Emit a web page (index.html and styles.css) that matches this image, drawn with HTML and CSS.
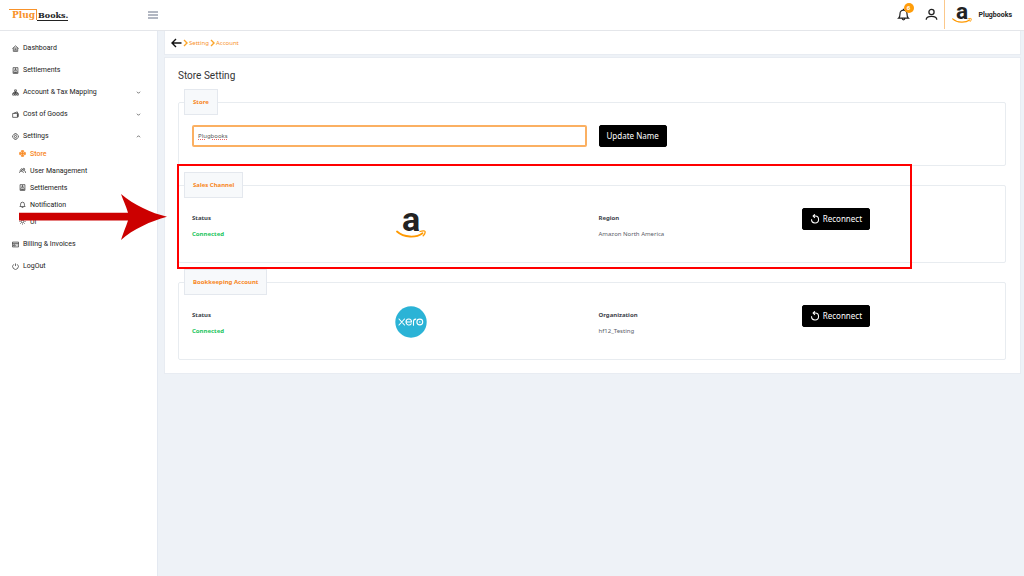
FILE: index.html
```html
<!DOCTYPE html>
<html lang="en">
<head>
<meta charset="utf-8">
<meta name="viewport" content="width=device-width, initial-scale=1">
<title>Plugbooks - Store Setting</title>
<link rel="stylesheet" href="styles.css">
</head>
<body>
<svg class="defs" aria-hidden="true">
  <symbol id="amazon" viewBox="0 0 30 28">
    <text class="amazon-letter" x="15" y="20" text-anchor="middle">a</text>
    <path d="M1 20.5C8 26.8 20 27 26.5 22.2" fill="none" stroke="#f90" stroke-width="1.8" stroke-linecap="round"/>
    <path d="M24 20.500c2.200-.9 4.800-.7 5-.1.3.9-.6 3.100-1.800 4.300" fill="none" stroke="#f90" stroke-width="1.300" stroke-linecap="round"/>
  </symbol>
  <symbol id="book" viewBox="0 0 16 16"><path d="M2.500 1.500h11v13h-11zM2.500 11.500h11M5.500 9c0-3 5-3 5 0M5 13h6"/><circle cx="8" cy="5" r="1.500"/></symbol>
  <symbol id="chevron" viewBox="0 0 16 16"><path d="M3 5.500l5 5 5-5"/></symbol>
  <symbol id="redo" viewBox="0 0 16 16"><path d="M2.500 8.500a5.600 5.600 0 1 0 6-5.300H5M7.800.5L5 3.300l2.800 2.900"/></symbol>
</svg>

<header class="topbar">
  <a class="logo" href="#" aria-label="PlugBooks"><span class="logo-plug">Plug</span><span class="logo-books">Books.</span></a>
  <button class="icon-button menu" aria-label="Toggle menu"><svg viewBox="0 0 10 8"><path d="M0 1h10M0 4h10M0 7h10"/></svg></button>
  <div class="topbar-right">
    <button class="icon-button bell" aria-label="Notifications">
      <svg viewBox="0 0 16 16"><path d="M2 12.500c1.700-1.500 1.700-3 1.700-5.500a4.300 4.300 0 0 1 8.600 0c0 2.500 0 4 1.700 5.500zM8 2.700V1M6.300 13c.2 2 3.200 2 3.400 0"/></svg>
      <span class="badge">6</span>
    </button>
    <button class="icon-button user" aria-label="Account"><svg viewBox="0 0 16 16"><circle cx="8" cy="5" r="3.200"/><path d="M1.500 14.500c0-5.700 13-5.700 13 0"/></svg></button>
    <div class="profile">
      <svg class="profile-logo" viewBox="0 0 30 28" role="img" aria-label="Amazon"><use href="#amazon"/></svg>
      <span>Plugbooks</span>
    </div>
  </div>
</header>

<div class="layout">
  <nav class="sidebar">
    <a class="item" href="#"><svg class="icon" viewBox="0 0 16 16"><path d="M1 8l7-6 7 6M3 7v7.500h10V7M6.500 14V9.500h3V14M5 7h6"/></svg>Dashboard</a>
    <a class="item" href="#"><svg class="icon"><use href="#book"/></svg>Settlements</a>
    <a class="item" href="#"><svg class="icon" viewBox="0 0 16 16"><path d="M6 2h4v4H6zM1.500 10h4v4h-4zM6.500 10h3v4h-3zM11 10h3.500v4H11zM8 6v4M3.500 10V8h9v2"/></svg>Account &amp; Tax Mapping<svg class="chevron"><use href="#chevron"/></svg></a>
    <a class="item" href="#"><svg class="icon" viewBox="0 0 16 16"><path d="M1.500 5.500h11v9h-11zM4 5l8-3 1 3M12.500 6h2v7h-2M11 9.500h3"/></svg>Cost of Goods<svg class="chevron"><use href="#chevron"/></svg></a>
    <a class="item" href="#"><svg class="icon" viewBox="0 0 16 16"><path d="M6 1.500h4l.7 2 2 .8 1.800 1.700v4l-1.800 1.700-2 .8-.7 2H6l-.7-2-2-.8L1.500 10V6l1.800-1.700 2-.8z"/><circle cx="8" cy="8" r="2.500"/></svg>Settings<svg class="chevron up"><use href="#chevron"/></svg></a>
    <div class="submenu">
      <a class="subitem active" href="#"><svg class="icon" viewBox="0 0 16 16"><path d="M5.500 1.500h5v4h4v5h-4v4h-5v-4h-4v-5h4zM8 2v12M2 8h12"/></svg>Store</a>
      <a class="subitem" href="#"><svg class="icon" viewBox="0 0 16 16"><circle cx="6" cy="6" r="2"/><circle cx="11" cy="5" r="2"/><path d="M1 13.500c0-5 9-5 9 0M10 8.500c3-1 5 1 5 5M1 10l2-2.500"/></svg>User Management</a>
      <a class="subitem" href="#"><svg class="icon"><use href="#book"/></svg>Settlements</a>
      <a class="subitem" href="#"><svg class="icon" viewBox="0 0 16 16"><path d="M2 12.500c1.700-1.500 1.700-3 1.700-5.500a4.300 4.300 0 0 1 8.600 0c0 2.500 0 4 1.700 5.500zM6 15h4"/></svg>Notification</a>
      <a class="subitem" href="#"><svg class="icon" viewBox="0 0 16 16"><circle cx="8" cy="8" r="3"/><path d="M8 1v2M8 13v2M1 8h2M13 8h2M3 3l1.500 1.500M11.500 11.500L13 13M3 13l1.500-1.500M11.500 4.500L13 3"/></svg>UI</a>
      <svg class="arrow" viewBox="0 0 148 46" aria-hidden="true"><path d="M0 18.700H109C107 12 104 6 102 0 115 11 132 19 148 22.700 132 27 114 35 102 46 104 39 107 33 109 26.500H0z" fill="#c00"/></svg>
    </div>
    <a class="item" href="#"><svg class="icon" viewBox="0 0 16 16"><path d="M1 2.500h14v11H1zM1 5.500h14M3.500 8.500h4v2.500h-4zM10 9h3"/></svg>Billing &amp; Invoices</a>
    <a class="item" href="#"><svg class="icon" viewBox="0 0 16 16"><path d="M4 3a6.500 6.500 0 1 0 8 0M8 1v6"/></svg>LogOut</a>
  </nav>

  <main class="content">
    <nav class="card breadcrumb" aria-label="Breadcrumb">
      <a class="back" href="#" aria-label="Back"><svg viewBox="0 0 11 10"><path d="M10.500 5H1M5 1L1 5l4 4"/></svg></a>
      <svg class="crumb-mark" viewBox="0 0 5 8"><path d="M1 1l3 3-3 3"/></svg><a href="#">Setting</a>
      <svg class="crumb-mark" viewBox="0 0 5 8"><path d="M1 1l3 3-3 3"/></svg><a href="#">Account</a>
    </nav>

    <section class="card settings">
      <h1>Store Setting</h1>
      <div class="groups">
        <form class="group">
          <fieldset>
            <legend>Store</legend>
            <div class="row name-row">
              <div class="name-field"><input type="text" value="Plugbooks" aria-label="Store name"></div>
              <div><button class="primary" type="button">Update Name</button></div>
            </div>
          </fieldset>
        </form>
        <div class="group">
          <fieldset>
            <legend>Sales Channel</legend>
            <div class="row">
              <div class="pair"><strong>Status</strong><strong class="ok">Connected</strong></div>
              <div><svg class="brand" viewBox="0 0 30 28" role="img" aria-label="Amazon"><use href="#amazon"/></svg></div>
              <div class="pair"><strong>Region</strong><span>Amazon North America</span></div>
              <div><button class="primary" type="button"><svg><use href="#redo"/></svg>Reconnect</button></div>
            </div>
          </fieldset>
          <div class="highlight"></div>
        </div>
        <div class="group">
          <fieldset>
            <legend>Bookkeeping Account</legend>
            <div class="row">
              <div class="pair"><strong>Status</strong><strong class="ok">Connected</strong></div>
              <div><svg class="brand xero" viewBox="0 0 32 32" role="img" aria-label="Xero"><circle cx="16" cy="16" r="15.700" fill="#2bb3d6" stroke="none"/><path d="M4 13l5.500 6M9.500 13L4 19M11 16h5.500c0-4-5.500-4-5.500 0 0 3.500 4 3.800 5.200 1.800M18.500 19.200v-3.700c0-1.600.8-2.400 2.300-2.400" fill="none" stroke="#fff" stroke-width="1.100" stroke-linecap="round"/><circle cx="24.800" cy="16" r="2.900" fill="none" stroke="#fff" stroke-width="1.100"/><circle cx="24.800" cy="16" r=".8" fill="#fff" stroke="none"/></svg></div>
              <div class="pair"><strong>Organization</strong><span>hf12_Testing</span></div>
              <div><button class="primary" type="button"><svg><use href="#redo"/></svg>Reconnect</button></div>
            </div>
          </fieldset>
        </div>
      </div>
    </section>
  </main>
</div>
</body>
</html>
```
FILE: styles.css
```css
* { box-sizing: border-box; }

body {
  margin: 0;
  min-height: 100vh;
  display: flex;
  flex-direction: column;
  background: #eef2f7;
  color: #222;
  font-family: "Noto Sans", "Open Sans", sans-serif;
  font-size: 6px;
}

a { color: inherit; text-decoration: none; }
button, input { font: inherit; }
svg { flex: none; fill: none; stroke: currentColor; }
.defs { position: absolute; width: 0; height: 0; }
.amazon-letter { font: 700 34px Roboto, sans-serif; fill: #222; stroke: none; }

.topbar {
  display: flex;
  align-items: center;
  height: 31px;
  padding: 0 12px 1px 9px;
  background: #fff;
  border-bottom: 1px solid #e4e6ea;
}

.logo {
  display: flex;
  align-items: flex-start;
  width: 139px;
  font: 700 8px/10px "DejaVu Serif", serif;
}
.logo-plug { height: 11px; padding: 0 1px 0 3px; color: #f8922a; border-top: 1px solid; border-right: 1px solid; font-size: 9px; }
.logo-books { height: 11px; margin-top: 1px; padding-left: 1px; color: #222; border-bottom: 1px solid; }

.icon-button { display: flex; padding: 0; border: 0; background: none; color: #222; }
.menu { color: #667085; }
.menu svg { width: 10px; height: 8px; }
.topbar-right { display: flex; align-items: center; align-self: stretch; margin-left: auto; }
.bell { position: relative; margin-right: 15px; }
.bell svg { width: 13px; height: 13px; stroke-width: 1.5; }
.user { margin-right: 6px; }
.user svg { width: 13px; height: 13px; stroke-width: 1.6; }
.badge {
  position: absolute;
  top: -5px;
  right: -4px;
  width: 10px;
  border-radius: 5px;
  background: #ff9d0a;
  color: #fff;
  font-size: 6px;
  font-weight: 700;
  line-height: 10px;
  text-align: center;
}
.profile {
  display: flex;
  align-items: center;
  align-self: stretch;
  gap: 7px;
  padding-left: 7px;
  border-left: 1px solid #fbc88b;
  font: 700 7px Roboto, sans-serif;
}
.profile-logo { width: 20px; height: 19px; }

.layout { display: flex; flex: 1; }

.sidebar {
  flex: none;
  width: 158px;
  padding: 6px 16px 0 12px;
  border-right: 1px solid #e4e9f1;
  background: #fff;
  font-family: Roboto, sans-serif;
  font-size: 7px;
}
.item, .subitem { display: flex; align-items: center; gap: 4px; height: 22px; }
.icon { width: 7px; height: 7px; stroke-width: 1.5; }
.chevron { width: 5px; height: 5px; margin-left: auto; stroke-width: 2; }
.up { transform: rotate(180deg); }
.submenu { position: relative; margin: -2px 0 3px; padding-left: 7px; }
.subitem { height: 17px; }
.active { color: #f8861b; font-weight: 500; }
.active .icon { stroke-width: 2; }
.arrow { position: absolute; top: 49px; left: 7px; width: 148px; height: 46px; z-index: 2; stroke: none; }

.content { flex: 1; min-width: 0; padding: 0 3px 0 6px; }
.card { background: #fff; border: 1px solid #e8ecf2; }

.breadcrumb {
  display: flex;
  align-items: center;
  height: 24px;
  padding-left: 6px;
  border-top: 0;
  color: #f8922a;
}
.breadcrumb a + .crumb-mark { margin-left: 1px; }
.breadcrumb .crumb-mark + a { margin-left: 1px; }
.back { color: #111; }
.back svg { display: block; width: 11px; height: 10px; stroke-width: 1.4; }
.crumb-mark { width: 5px; height: 8px; stroke: #fba52a; stroke-width: 1.4; }

.settings { margin-top: 2px; padding: 11px 14px 13px 13px; }
h1 { margin: 0; color: #333; font: 400 10px/14px Roboto, sans-serif; }

.groups { display: flex; flex-direction: column; gap: 6px; margin-top: 6px; }
.group { position: relative; }
fieldset { min-width: 0; margin: 0; padding: 0; border: 1px solid #e8ecf0; border-radius: 2px; }
legend {
  height: 26px;
  margin-left: 5px;
  padding: 0 8px;
  border: 1px solid #e4e8ee;
  background: #f7f9fb;
  color: #f8861b;
  font-weight: 700;
  line-height: 24px;
}
.row { display: grid; grid-template-columns: repeat(4, 1fr); min-height: 64px; padding: 10px 0 0 13px; }
.name-row { min-height: 50px; }
.name-field { grid-column: span 2; padding-right: 12px; }
.name-field input {
  display: block;
  width: 100%;
  height: 22px;
  padding: 0 4px;
  border: 2px solid #fbb062;
  border-radius: 2px;
  outline: 0;
  color: #555;
  text-decoration: underline dotted #e66 1px;
}
.primary {
  display: flex;
  align-items: center;
  gap: 3px;
  height: 22px;
  padding: 0 7px 1px;
  border: 1px solid #000;
  border-radius: 2px;
  background: #000;
  color: #fff;
  font-size: 8px;
}
.primary svg { width: 10px; height: 10px; stroke-width: 1.7; }
.pair { display: flex; flex-direction: column; gap: 8px; padding-top: 6px; color: #5a6068; line-height: 8px; }
.pair strong { color: #3d434b; }
.pair .ok { color: #21c55d; }
.brand { display: block; width: 30px; height: 28px; margin: 3px 0 0 1px; }
.xero { width: 32px; height: 32px; margin: 1px 0 0; }
.highlight { position: absolute; top: -8px; bottom: -6px; left: -1px; right: 94px; z-index: 1; border: 2px solid #f00; }

@media (max-width: 700px) {
  .row { grid-template-columns: repeat(2, 1fr); gap: 8px 0; }
}
```
